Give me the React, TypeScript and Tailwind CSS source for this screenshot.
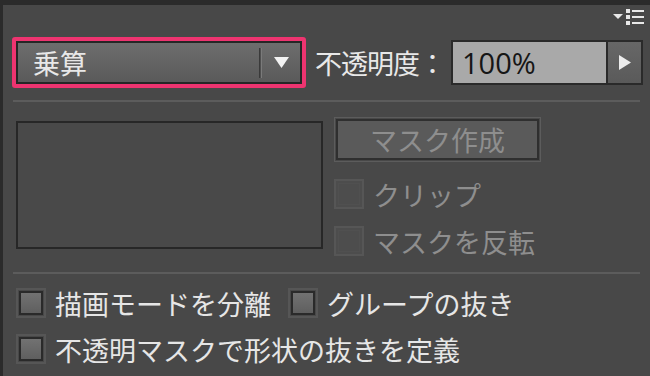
import React from "react";

const JP = { fontFamily: '"Noto Sans CJK JP", "Noto Sans", sans-serif' };

function Check({ disabled, label }: { disabled?: boolean; label: string }) {
  return (
    <div className="flex items-center gap-[9px]">
      {disabled ? (
        <div className="w-[30px] h-[30px] border-2 border-[#565656] bg-[#4d4d4d] p-[2px]">
          <div className="w-full h-full border border-[#505050]" />
        </div>
      ) : (
        <div className="w-[30px] h-[30px] border-2 border-[#565656] p-[1px] bg-[#484848]">
          <div className="w-full h-full border-2 border-[#2a2a2a] bg-gradient-to-b from-[#727272] to-[#5f5f5f]" />
        </div>
      )}
      <span
        className={`text-[27px] leading-none ${disabled ? "text-[#8e8e8e]" : "text-[#e6e6e6]"}`}
      >
        {label}
      </span>
    </div>
  );
}

export default function App() {
  return (
    <div
      className="w-[650px] h-[376px] bg-[#484848] border-t-[5px] border-l-[3px] border-[#2b2b2b] overflow-hidden flex flex-col"
      style={JP}
    >
      {/* panel menu */}
      <div className="h-[32px] flex justify-end items-start pt-[3px] pr-[5px]">
        <svg width="32" height="18" viewBox="0 0 32 18">
          <polygon points="0,6 10,6 5,11" fill="#e8e8e8" />
          <rect x="13" y="1" width="4" height="4" fill="#e8e8e8" />
          <rect x="13" y="7" width="4" height="4" fill="#e8e8e8" />
          <rect x="13" y="13" width="4" height="4" fill="#e8e8e8" />
          <rect x="19" y="2" width="12" height="2" fill="#e8e8e8" />
          <rect x="19" y="8" width="12" height="2" fill="#e8e8e8" />
          <rect x="19" y="14" width="12" height="2" fill="#e8e8e8" />
        </svg>
      </div>

      {/* blend + opacity */}
      <div className="flex items-center pl-[9px] pr-[7px] h-[51px]">
        <div className="w-[294px] h-[51px] border-[4px] border-[#ee3470] rounded-[3px] p-0">
          <div className="w-full h-full border-2 border-[#262626] bg-gradient-to-b from-[#6d6d6d] to-[#5a5a5a] flex items-center">
            <span className="flex-1 pl-[15px] text-[27px] leading-none text-[#e8e8e8]">乗算</span>
            <div className="w-[3px] h-[30px] border-l border-r border-l-[#3a3a3a] border-r-[#7a7a7a] bg-[#505050]" />
            <div className="w-[38px] flex justify-center">
              <svg width="15" height="11" viewBox="0 0 15 11">
                <polygon points="0,0 15,0 7.5,11" fill="#f2f2f2" />
              </svg>
            </div>
          </div>
        </div>
        <span className="ml-[9px] text-[27px] leading-none text-[#e8e8e8] tracking-[-1px]">不透明度：</span>
        <div className="ml-auto w-[192px] h-[45px] border-2 border-[#2a2a2a] flex">
          <div className="flex-1 bg-[#a9a9a9] flex items-center pl-[9px]">
            <span
              className="text-[29px] leading-none text-[#161616]"
              style={{ fontFamily: '"Open Sans", "Noto Sans", sans-serif' }}
            >
              100%
            </span>
          </div>
          <div className="w-[35px] border-l-2 border-[#2a2a2a] bg-gradient-to-b from-[#676767] to-[#5a5a5a] flex items-center justify-center">
            <svg width="12" height="15" viewBox="0 0 12 15">
              <polygon points="0,0 12,7.5 0,15" fill="#ececec" />
            </svg>
          </div>
        </div>
      </div>

      <div className="mt-[12px] mx-[10px] h-[2px] bg-[#5c5c5c]" />

      {/* mask area */}
      <div className="flex pl-[13px] pt-[15px] h-[170px]">
        <div className="mt-[4px] w-[307px] h-[128px] border-2 border-[#272727] bg-[#494949]" />
        <div className="ml-[11px] flex flex-col gap-[17px]">
          <div className="w-[207px] h-[45px] border border-[#5c5c5c] p-[1px]">
            <div className="w-full h-full border-2 border-[#2f2f2f] bg-[#5a5a5a] flex items-center justify-center">
              <span className="text-[27px] leading-none text-[#8e8e8e]">マスク作成</span>
            </div>
          </div>
          <div className="flex flex-col gap-[17px]">
            <Check disabled label="クリップ" />
            <Check disabled label="マスクを反転" />
          </div>
        </div>
      </div>

      <div className="mx-[10px] h-[2px] bg-[#5c5c5c]" />

      {/* options */}
      <div className="flex flex-col gap-[16px] pl-[13px] pt-[14px]">
        <div className="flex items-center gap-[17px]">
          <Check label="描画モードを分離" />
          <Check label="グループの抜き" />
        </div>
        <Check label="不透明マスクで形状の抜きを定義" />
      </div>
    </div>
  );
}
